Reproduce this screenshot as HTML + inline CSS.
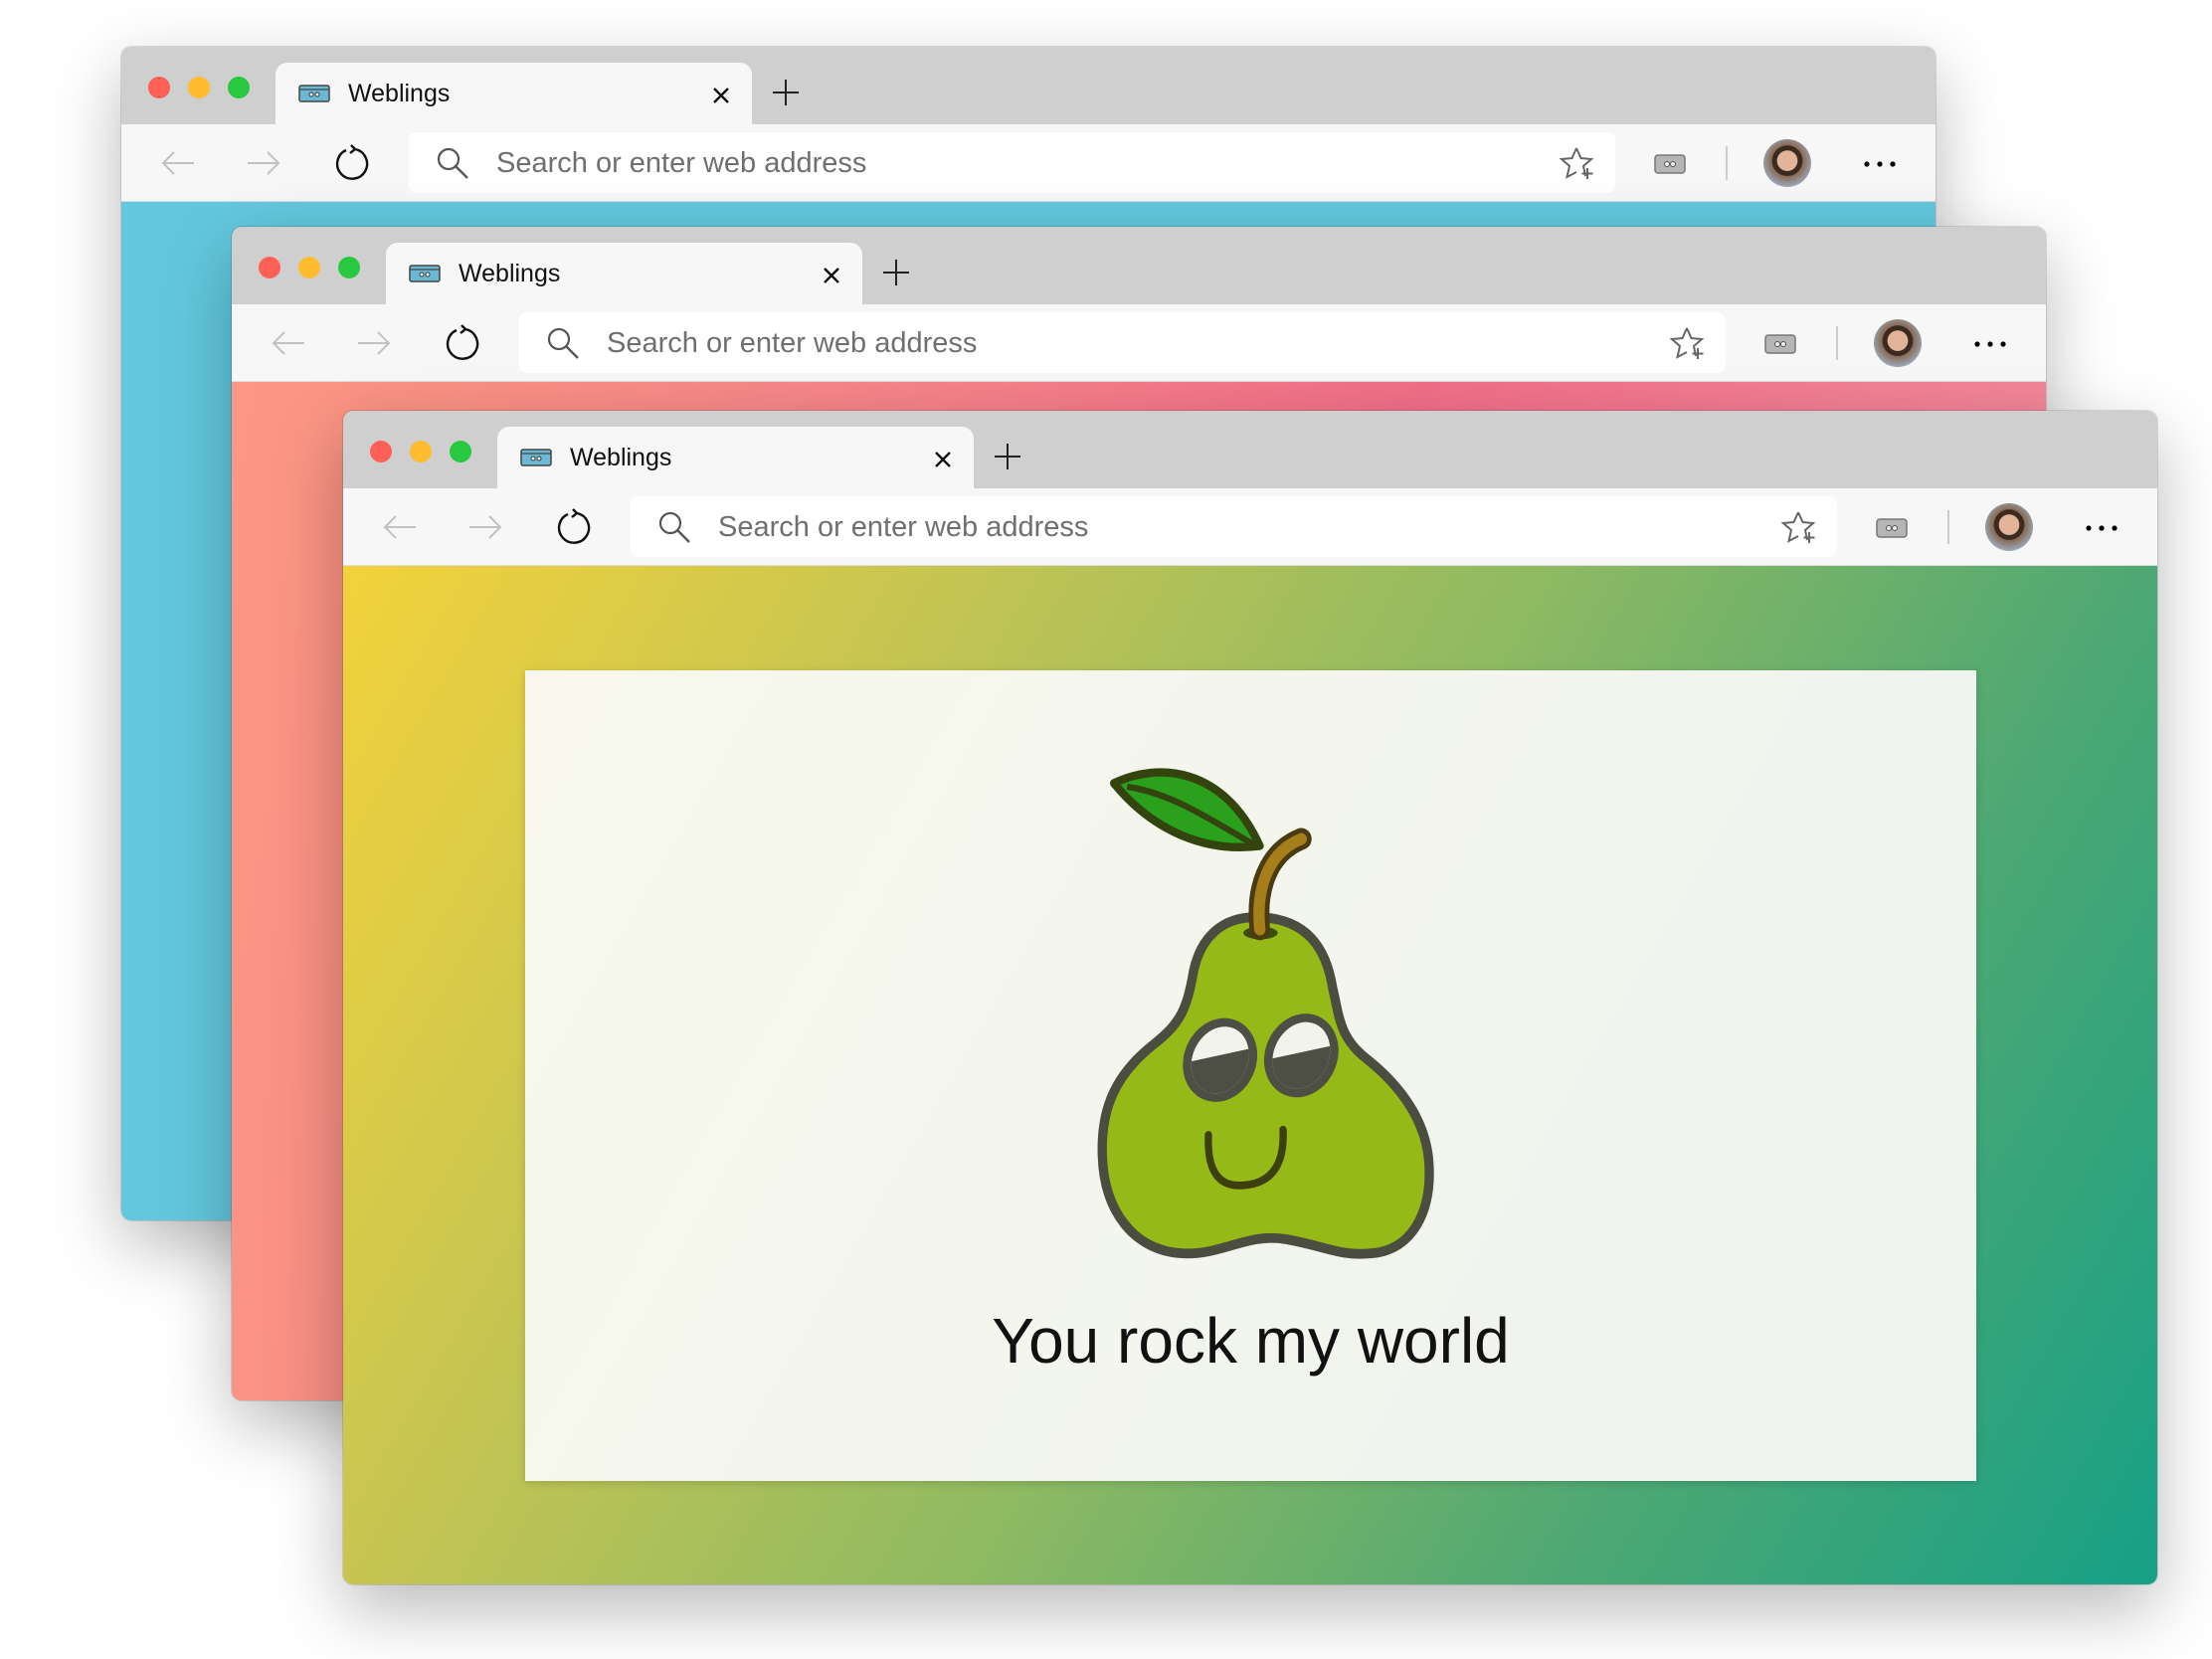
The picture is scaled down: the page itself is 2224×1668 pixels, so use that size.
<!DOCTYPE html>
<html><head><meta charset="utf-8"><style>
*{margin:0;padding:0;box-sizing:border-box}
body{width:2224px;height:1668px;background:#fff;position:relative;overflow:hidden;font-family:"Liberation Sans",sans-serif}
.win{position:absolute;width:1824px;height:1180px;border-radius:10px;overflow:hidden;box-shadow:0 25px 70px rgba(0,0,0,.28),0 0 0 1px rgba(0,0,0,.12)}
.tabbar{position:absolute;left:0;top:0;width:100%;height:78px;background:#cfcfcf}
.l{position:absolute;top:30px;width:22px;height:22px;border-radius:50%}
.tab{position:absolute;left:155px;top:16px;width:479px;height:62px;background:#f7f7f7;border-radius:12px 12px 0 0}
.tab .t{position:absolute;left:73px;top:17px;font-size:25px;color:#111}
.fav{position:absolute;left:23px;top:22px}
.cls{position:absolute;left:437px;top:22px}
.plus{position:absolute;left:655px;top:33px}
.tool{position:absolute;left:0;top:78px;width:100%;height:78px;background:#f7f7f7;border-bottom:1px solid #dedede}
.addr{position:absolute;left:289px;top:8px;width:1213px;height:61px;background:#fff;border-radius:8px}
.addr .p{position:absolute;left:88px;top:15px;font-size:29px;color:#6f6f6f}
.ic{position:absolute}
.content{position:absolute;left:0;top:156px;width:100%;height:1024px}
</style></head><body>

<div class="win" style="left:122px;top:47px">
 <div class="tabbar">
  <div class="l" style="left:27px;background:#fe5f57"></div><div class="l" style="left:67px;background:#febc2e"></div><div class="l" style="left:107px;background:#28c840"></div>
  <div class="tab"><svg class="fav" width="32" height="18" viewBox="0 0 32 18"><rect x="1" y="1" width="30" height="16" rx="2" fill="#6bb8d4" stroke="#444" stroke-width="1.5"/><line x1="1" y1="5" x2="31" y2="5" stroke="#444" stroke-width="1.2"/><circle cx="13" cy="10" r="2" fill="#fff" stroke="#333"/><circle cx="19" cy="10" r="2" fill="#fff" stroke="#333"/></svg><div class="t">Weblings</div>
  <svg class="cls" width="22" height="22" viewBox="0 0 22 22"><path d="M4 4L18 18M18 4L4 18" stroke="#111" stroke-width="2.4"/></svg></div>
  <svg class="plus" width="26" height="26" viewBox="0 0 26 26"><path d="M13 0V26M0 13H26" stroke="#222" stroke-width="2"/></svg>
 </div>
 <div class="tool">
  <svg class="ic" style="left:40px;top:27px" width="34" height="24" viewBox="0 0 34 24"><path d="M33 12H2M13 1L2 12L13 23" fill="none" stroke="#c2c2c2" stroke-width="2"/></svg>
  <svg class="ic" style="left:126px;top:27px" width="34" height="24" viewBox="0 0 34 24"><path d="M1 12H32M21 1L32 12L21 23" fill="none" stroke="#c2c2c2" stroke-width="2"/></svg>
  <svg class="ic" style="left:214px;top:20px" width="36" height="38" viewBox="0 0 36 38"><path d="M12 6A15 15 0 1 0 21 5M21 5L17 1M21 5L16 9" fill="none" stroke="#111" stroke-width="2.4"/></svg>
  <div class="addr"><svg class="ic" style="left:27px;top:14px" width="34" height="34" viewBox="0 0 34 34"><circle cx="13" cy="13" r="10" fill="none" stroke="#555" stroke-width="2.2"/><path d="M20 20L32 32" stroke="#555" stroke-width="2.4"/></svg><div class="p">Search or enter web address</div>
  <svg class="ic" style="left:1157px;top:14px" width="36" height="34" viewBox="0 0 36 34"><path d="M17 2L21.5 12L32 13L24 20L26 30M17 2L12.5 12L2 13L10 20L7.5 31L17 26" fill="none" stroke="#666" stroke-width="2"/><path d="M28 22V33M22.5 27.5H33.5" stroke="#666" stroke-width="2"/></svg></div>
  <svg class="ic" style="left:1541px;top:28px" width="32" height="22" viewBox="0 0 32 22"><rect x="1" y="3" width="30" height="18" rx="3" fill="#b5b5b5" stroke="#777" stroke-width="1.5"/><circle cx="13" cy="12" r="2.5" fill="#eee" stroke="#555"/><circle cx="19" cy="12" r="2.5" fill="#eee" stroke="#555"/></svg>
  <div class="ic" style="left:1613px;top:22px;width:2px;height:34px;background:#ccc"></div>
  <div class="ic" style="left:1651px;top:15px;width:48px;height:48px;border-radius:50%;background:radial-gradient(circle at 50% 45%,#e2b49a 0 28%,#3a2a20 30% 42%,#8a6a55 44%,#9fb7d0 80%)"></div>
  <svg class="ic" style="left:1751px;top:36px" width="34" height="8" viewBox="0 0 34 8"><circle cx="4" cy="4" r="2.6"/><circle cx="17" cy="4" r="2.6"/><circle cx="30" cy="4" r="2.6"/></svg>
 </div>
 <div class="content" style="background:#63c8de"></div>
</div>

<div class="win" style="left:233px;top:228px">
 <div class="tabbar">
  <div class="l" style="left:27px;background:#fe5f57"></div><div class="l" style="left:67px;background:#febc2e"></div><div class="l" style="left:107px;background:#28c840"></div>
  <div class="tab"><svg class="fav" width="32" height="18" viewBox="0 0 32 18"><rect x="1" y="1" width="30" height="16" rx="2" fill="#6bb8d4" stroke="#444" stroke-width="1.5"/><line x1="1" y1="5" x2="31" y2="5" stroke="#444" stroke-width="1.2"/><circle cx="13" cy="10" r="2" fill="#fff" stroke="#333"/><circle cx="19" cy="10" r="2" fill="#fff" stroke="#333"/></svg><div class="t">Weblings</div>
  <svg class="cls" width="22" height="22" viewBox="0 0 22 22"><path d="M4 4L18 18M18 4L4 18" stroke="#111" stroke-width="2.4"/></svg></div>
  <svg class="plus" width="26" height="26" viewBox="0 0 26 26"><path d="M13 0V26M0 13H26" stroke="#222" stroke-width="2"/></svg>
 </div>
 <div class="tool">
  <svg class="ic" style="left:40px;top:27px" width="34" height="24" viewBox="0 0 34 24"><path d="M33 12H2M13 1L2 12L13 23" fill="none" stroke="#c2c2c2" stroke-width="2"/></svg>
  <svg class="ic" style="left:126px;top:27px" width="34" height="24" viewBox="0 0 34 24"><path d="M1 12H32M21 1L32 12L21 23" fill="none" stroke="#c2c2c2" stroke-width="2"/></svg>
  <svg class="ic" style="left:214px;top:20px" width="36" height="38" viewBox="0 0 36 38"><path d="M12 6A15 15 0 1 0 21 5M21 5L17 1M21 5L16 9" fill="none" stroke="#111" stroke-width="2.4"/></svg>
  <div class="addr"><svg class="ic" style="left:27px;top:14px" width="34" height="34" viewBox="0 0 34 34"><circle cx="13" cy="13" r="10" fill="none" stroke="#555" stroke-width="2.2"/><path d="M20 20L32 32" stroke="#555" stroke-width="2.4"/></svg><div class="p">Search or enter web address</div>
  <svg class="ic" style="left:1157px;top:14px" width="36" height="34" viewBox="0 0 36 34"><path d="M17 2L21.5 12L32 13L24 20L26 30M17 2L12.5 12L2 13L10 20L7.5 31L17 26" fill="none" stroke="#666" stroke-width="2"/><path d="M28 22V33M22.5 27.5H33.5" stroke="#666" stroke-width="2"/></svg></div>
  <svg class="ic" style="left:1541px;top:28px" width="32" height="22" viewBox="0 0 32 22"><rect x="1" y="3" width="30" height="18" rx="3" fill="#b5b5b5" stroke="#777" stroke-width="1.5"/><circle cx="13" cy="12" r="2.5" fill="#eee" stroke="#555"/><circle cx="19" cy="12" r="2.5" fill="#eee" stroke="#555"/></svg>
  <div class="ic" style="left:1613px;top:22px;width:2px;height:34px;background:#ccc"></div>
  <div class="ic" style="left:1651px;top:15px;width:48px;height:48px;border-radius:50%;background:radial-gradient(circle at 50% 45%,#e2b49a 0 28%,#3a2a20 30% 42%,#8a6a55 44%,#9fb7d0 80%)"></div>
  <svg class="ic" style="left:1751px;top:36px" width="34" height="8" viewBox="0 0 34 8"><circle cx="4" cy="4" r="2.6"/><circle cx="17" cy="4" r="2.6"/><circle cx="30" cy="4" r="2.6"/></svg>
 </div>
 <div class="content" style="background:linear-gradient(100deg,#fc9883 0%,#f7838a 35%,#f26f88 60%,#f48da0 100%)"></div>
</div>

<div class="win" style="left:345px;top:413px">
 <div class="tabbar">
  <div class="l" style="left:27px;background:#fe5f57"></div><div class="l" style="left:67px;background:#febc2e"></div><div class="l" style="left:107px;background:#28c840"></div>
  <div class="tab"><svg class="fav" width="32" height="18" viewBox="0 0 32 18"><rect x="1" y="1" width="30" height="16" rx="2" fill="#6bb8d4" stroke="#444" stroke-width="1.5"/><line x1="1" y1="5" x2="31" y2="5" stroke="#444" stroke-width="1.2"/><circle cx="13" cy="10" r="2" fill="#fff" stroke="#333"/><circle cx="19" cy="10" r="2" fill="#fff" stroke="#333"/></svg><div class="t">Weblings</div>
  <svg class="cls" width="22" height="22" viewBox="0 0 22 22"><path d="M4 4L18 18M18 4L4 18" stroke="#111" stroke-width="2.4"/></svg></div>
  <svg class="plus" width="26" height="26" viewBox="0 0 26 26"><path d="M13 0V26M0 13H26" stroke="#222" stroke-width="2"/></svg>
 </div>
 <div class="tool">
  <svg class="ic" style="left:40px;top:27px" width="34" height="24" viewBox="0 0 34 24"><path d="M33 12H2M13 1L2 12L13 23" fill="none" stroke="#c2c2c2" stroke-width="2"/></svg>
  <svg class="ic" style="left:126px;top:27px" width="34" height="24" viewBox="0 0 34 24"><path d="M1 12H32M21 1L32 12L21 23" fill="none" stroke="#c2c2c2" stroke-width="2"/></svg>
  <svg class="ic" style="left:214px;top:20px" width="36" height="38" viewBox="0 0 36 38"><path d="M12 6A15 15 0 1 0 21 5M21 5L17 1M21 5L16 9" fill="none" stroke="#111" stroke-width="2.4"/></svg>
  <div class="addr"><svg class="ic" style="left:27px;top:14px" width="34" height="34" viewBox="0 0 34 34"><circle cx="13" cy="13" r="10" fill="none" stroke="#555" stroke-width="2.2"/><path d="M20 20L32 32" stroke="#555" stroke-width="2.4"/></svg><div class="p">Search or enter web address</div>
  <svg class="ic" style="left:1157px;top:14px" width="36" height="34" viewBox="0 0 36 34"><path d="M17 2L21.5 12L32 13L24 20L26 30M17 2L12.5 12L2 13L10 20L7.5 31L17 26" fill="none" stroke="#666" stroke-width="2"/><path d="M28 22V33M22.5 27.5H33.5" stroke="#666" stroke-width="2"/></svg></div>
  <svg class="ic" style="left:1541px;top:28px" width="32" height="22" viewBox="0 0 32 22"><rect x="1" y="3" width="30" height="18" rx="3" fill="#b5b5b5" stroke="#777" stroke-width="1.5"/><circle cx="13" cy="12" r="2.5" fill="#eee" stroke="#555"/><circle cx="19" cy="12" r="2.5" fill="#eee" stroke="#555"/></svg>
  <div class="ic" style="left:1613px;top:22px;width:2px;height:34px;background:#ccc"></div>
  <div class="ic" style="left:1651px;top:15px;width:48px;height:48px;border-radius:50%;background:radial-gradient(circle at 50% 45%,#e2b49a 0 28%,#3a2a20 30% 42%,#8a6a55 44%,#9fb7d0 80%)"></div>
  <svg class="ic" style="left:1751px;top:36px" width="34" height="8" viewBox="0 0 34 8"><circle cx="4" cy="4" r="2.6"/><circle cx="17" cy="4" r="2.6"/><circle cx="30" cy="4" r="2.6"/></svg>
 </div>
 <div class="content" style="background:linear-gradient(120deg,#f3d23b 0%,#c6c552 25%,#8fba62 50%,#4ea873 75%,#16a086 100%)">
  <div style="position:absolute;left:183px;top:105px;width:1459px;height:815px;background:linear-gradient(120deg,#f8f8ec,#eef3ef);box-shadow:0 2px 8px rgba(0,0,0,.15)">
   <svg style="position:absolute;left:552px;top:76px" width="400" height="580" viewBox="0 0 1200 1740">
    <defs>
     <clipPath id="c1"><polygon points="200,1100 560,780 700,1200"/></clipPath>
     <clipPath id="c2"><polygon points="460,1080 820,760 940,1200"/></clipPath>
    </defs>
    <g transform="translate(0,-3) scale(1,1.05)">
    <path d="M120 110C250 50 450 60 560 290C400 310 240 250 120 110Z" fill="#2aa01c" stroke="#33440f" stroke-width="24" stroke-linejoin="round"/>
    <path d="M160 120C300 140 420 220 540 285" fill="none" stroke="#33440f" stroke-width="18"/>
    <path d="M560 520C548 420 580 310 685 270" fill="none" stroke="#4a3c10" stroke-width="62" stroke-linecap="round"/>
    <path d="M560 495C440 490 380 560 360 650C340 760 320 800 240 860C120 950 80 1050 85 1180C90 1340 180 1450 320 1460C440 1470 520 1400 640 1420C760 1440 800 1470 900 1460C1020 1450 1080 1340 1070 1200C1060 1060 960 960 880 900C800 840 800 780 780 700C760 580 700 500 560 495Z" fill="#95ba18" stroke="#4a4d40" stroke-width="28"/>
    <ellipse cx="562" cy="540" rx="52" ry="18" fill="#3d4a12"/>
    <path d="M560 530C548 420 580 310 685 270" fill="none" stroke="#4a3c10" stroke-width="62" stroke-linecap="round"/>
    <path d="M560 530C548 420 580 310 685 270" fill="none" stroke="#a67f1a" stroke-width="34" stroke-linecap="round"/>
    <ellipse cx="440" cy="905" rx="108" ry="124" transform="rotate(30 440 905)" fill="#4d4f45"/>
    <ellipse cx="440" cy="905" rx="82" ry="100" transform="rotate(30 440 905)" fill="#f2f4ec"/>
    <ellipse cx="440" cy="905" rx="82" ry="100" transform="rotate(30 440 905)" fill="#4d4f45" clip-path="url(#c1)"/>
    <ellipse cx="685" cy="892" rx="108" ry="124" transform="rotate(30 685 892)" fill="#4d4f45"/>
    <ellipse cx="685" cy="892" rx="82" ry="100" transform="rotate(30 685 892)" fill="#f2f4ec"/>
    <ellipse cx="685" cy="892" rx="82" ry="100" transform="rotate(30 685 892)" fill="#4d4f45" clip-path="url(#c2)"/>
    <path d="M405 1120C400 1230 440 1270 510 1265C600 1260 635 1200 630 1105" fill="none" stroke="#3c4010" stroke-width="22" stroke-linecap="round"/>
    </g>
   </svg>
   <div style="position:absolute;left:0;width:100%;top:636px;text-align:center;font-size:64px;line-height:76px;color:#111">You rock my world</div>
  </div>
 </div>
</div>
</body></html>
